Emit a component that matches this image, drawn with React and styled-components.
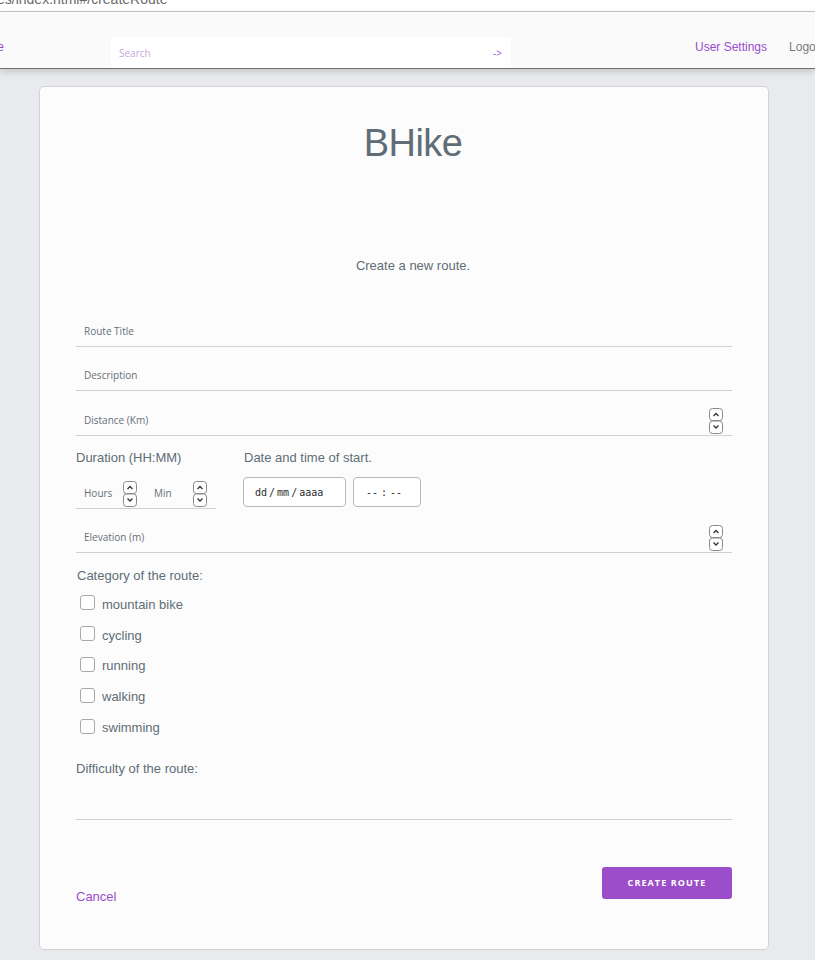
import React from 'react'
import styled, { createGlobalStyle } from 'styled-components'

const GlobalStyle = createGlobalStyle`
  body {
    margin: 0;
    background: #e9eaed;
    font-family: "Liberation Sans", Arial, sans-serif;
    color: #606c76;
  }
`

const UrlStrip = styled.div`
  height: 11px;
  background: #ffffff;
  border-bottom: 1px solid #c6c6c6;
  overflow: hidden;
`

const UrlText = styled.div`
  font-size: 14px;
  line-height: 14px;
  margin-top: -8px;
  margin-left: -3px;
  color: #6a6a6a;
`

const NavBar = styled.nav`
  height: 56px;
  background: #fafafa;
  overflow: hidden;
  box-shadow: 0 1px 0 #6f6f6f, 0 3px 8px rgba(0, 0, 0, 0.18);
  position: relative;
  z-index: 1;
`

const NavInner = styled.div`
  display: flex;
  align-items: flex-start;
  height: 100%;
  width: 900px;
  margin-left: -28px;
`

const NavLink = styled.a`
  font-size: 12px;
  line-height: 14px;
  margin-top: 28px;
  margin-left: ${p => p.$gap || 0}px;
  color: ${p => (p.$muted ? '#7a7a7a' : '#9b4dca')};
  text-decoration: none;
  white-space: nowrap;
`

const SearchBox = styled.div`
  align-self: flex-end;
  margin-left: 107px;
  width: 400px;
  height: 31px;
  background: #ffffff;
  display: flex;
  align-items: center;
  justify-content: space-between;
  padding: 0 8px;
  box-sizing: border-box;
  font-family: "Open Sans", sans-serif;
  font-size: 10px;
`

const SearchHint = styled.span`
  color: #c9a6e0;
`

const SearchGo = styled.span`
  color: #9b4dca;
  margin-right: 1px;
`

const Main = styled.main`
  padding: 18px 0 9px 39px;
`

const Card = styled.section`
  width: 730px;
  height: 864px;
  box-sizing: border-box;
  background: #fcfcfc;
  border: 1px solid #d3d3d6;
  border-radius: 5px;
  padding: 0 36px;
  display: flex;
  flex-direction: column;
`

const Title = styled.h1`
  margin: 33px 0 0;
  padding-left: 18px;
  font-size: 38px;
  letter-spacing: -0.6px;
  line-height: 46px;
  font-weight: 400;
  text-align: center;
  color: #606c76;
`

const Subtitle = styled.p`
  margin: 92px 0 0;
  padding-left: 18px;
  font-size: 13px;
  line-height: 16px;
  text-align: center;
`

const Field = styled.div`
  display: flex;
  align-items: center;
  height: 30px;
  margin-top: ${p => p.$top}px;
  padding: 0 9px 0 8px;
  border-bottom: 1px solid #d1d1d1;
  width: ${p => (p.$width ? `${p.$width}px` : 'auto')};
  box-sizing: border-box;
`

const FieldLabel = styled.span`
  font-family: "Open Sans", sans-serif;
  font-size: 10px;
  color: #666f78;
  flex: 1;
  margin-top: -1px;
`

const SmallLabel = styled.span`
  font-family: "Open Sans", sans-serif;
  font-size: 10px;
  color: #666f78;
  width: ${p => p.$width}px;
  margin-left: ${p => p.$left || 0}px;
  margin-top: -1px;
`

const Row = styled.div`
  display: flex;
  gap: 27px;
  margin-top: 14px;
`

const Column = styled.div`
  display: flex;
  flex-direction: column;
`

const Caption = styled.div`
  font-size: 13px;
  line-height: 15px;
  margin-left: ${p => p.$indent || 0}px;
  margin-top: ${p => p.$top || 0}px;
`

const Pickers = styled.div`
  display: flex;
  gap: 7px;
  margin-top: 12px;
`

const PickerBox = styled.div`
  width: ${p => p.$width}px;
  height: 30px;
  box-sizing: border-box;
  border: 1px solid #b9b9b9;
  border-radius: 4px;
  background: #ffffff;
  display: flex;
  align-items: center;
  gap: ${p => p.$gap}px;
  padding-left: ${p => p.$pad}px;
  font-family: "DejaVu Sans Mono", "Liberation Mono", monospace;
  font-size: 10px;
  color: #2b2b2b;
  white-space: pre;
`

const CheckList = styled.div`
  display: flex;
  flex-direction: column;
  margin-top: 6px;
`

const CheckRow = styled.label`
  display: flex;
  align-items: center;
  height: 30.8px;
  padding-left: 4px;
  font-size: 13px;
`

const Box = styled.span`
  width: 13px;
  height: 13px;
  border: 1px solid #a9a9a9;
  border-radius: 3px;
  background: #ffffff;
  margin-right: 7px;
  margin-top: -3px;
  flex-shrink: 0;
`

const DifficultyTrack = styled.div`
  height: 43px;
  border-bottom: 1px solid #d1d1d1;
`

const Footer = styled.div`
  display: flex;
  justify-content: space-between;
  align-items: flex-start;
  margin-top: 47px;
`

const CancelLink = styled.a`
  font-size: 13px;
  line-height: 16px;
  margin-top: 22px;
  color: #9b4dca;
  text-decoration: none;
`

const PrimaryButton = styled.button`
  width: 130px;
  height: 32px;
  border: none;
  border-radius: 3px;
  background: #9b4dca;
  color: #ffffff;
  font-family: "Open Sans", sans-serif;
  font-weight: 700;
  font-size: 9px;
  letter-spacing: 1.1px;
  text-transform: uppercase;
  padding: 0;
`

const Spinner = () => (
  <svg width="14" height="26" viewBox="0 0 14 26" style={{ flexShrink: 0 }}>
    <rect x="0.5" y="0.5" width="13" height="12" rx="3" fill="#fff" stroke="#8a8a8a" />
    <rect x="0.5" y="13" width="13" height="12.5" rx="3" fill="#fff" stroke="#8a8a8a" />
    <path d="M4.5 8 L7 5.5 L9.5 8" fill="none" stroke="#333" strokeWidth="1.3" />
    <path d="M4.5 17.5 L7 20 L9.5 17.5" fill="none" stroke="#333" strokeWidth="1.3" />
  </svg>
)

const categories = ['mountain bike', 'cycling', 'running', 'walking', 'swimming']

export default function App() {
  return (
    <>
      <GlobalStyle />
      <UrlStrip>
        <UrlText>es/index.html#/createRoute</UrlText>
      </UrlStrip>
      <NavBar>
        <NavInner>
          <NavLink href="#">Home</NavLink>
          <SearchBox>
            <SearchHint>Search</SearchHint>
            <SearchGo>-&gt;</SearchGo>
          </SearchBox>
          <NavLink href="#" $gap={184}>User Settings</NavLink>
          <NavLink href="#" $gap={22} $muted>Logout</NavLink>
        </NavInner>
      </NavBar>
      <Main>
        <Card>
          <Title>BHike</Title>
          <Subtitle>Create a new route.</Subtitle>

          <Field $top={43}>
            <FieldLabel>Route Title</FieldLabel>
          </Field>
          <Field $top={14}>
            <FieldLabel>Description</FieldLabel>
          </Field>
          <Field $top={15}>
            <FieldLabel>Distance (Km)</FieldLabel>
            <Spinner />
          </Field>

          <Row>
            <Column>
              <Caption>Duration (HH:MM)</Caption>
              <Field $top={14} $width={140}>
                <SmallLabel $width={39}>Hours</SmallLabel>
                <Spinner />
                <SmallLabel $width={39} $left={17}>Min</SmallLabel>
                <Spinner />
              </Field>
            </Column>
            <Column>
              <Caption $indent={1}>Date and time of start.</Caption>
              <Pickers>
                <PickerBox $width={103} $pad={11} $gap={2}>
                  <span>dd</span><span>/</span><span>mm</span><span>/</span><span>aaaa</span>
                </PickerBox>
                <PickerBox $width={68} $pad={12} $gap={3}>
                  <span>--</span><span>:</span><span>--</span>
                </PickerBox>
              </Pickers>
            </Column>
          </Row>

          <Field $top={14}>
            <FieldLabel>Elevation (m)</FieldLabel>
            <Spinner />
          </Field>

          <Caption $indent={1} $top={15}>Category of the route:</Caption>
          <CheckList>
            {categories.map(c => (
              <CheckRow key={c}>
                <Box />
                {c}
              </CheckRow>
            ))}
          </CheckList>

          <Caption $top={18}>Difficulty of the route:</Caption>
          <DifficultyTrack />

          <Footer>
            <CancelLink href="#">Cancel</CancelLink>
            <PrimaryButton>Create route</PrimaryButton>
          </Footer>
        </Card>
      </Main>
    </>
  )
}
